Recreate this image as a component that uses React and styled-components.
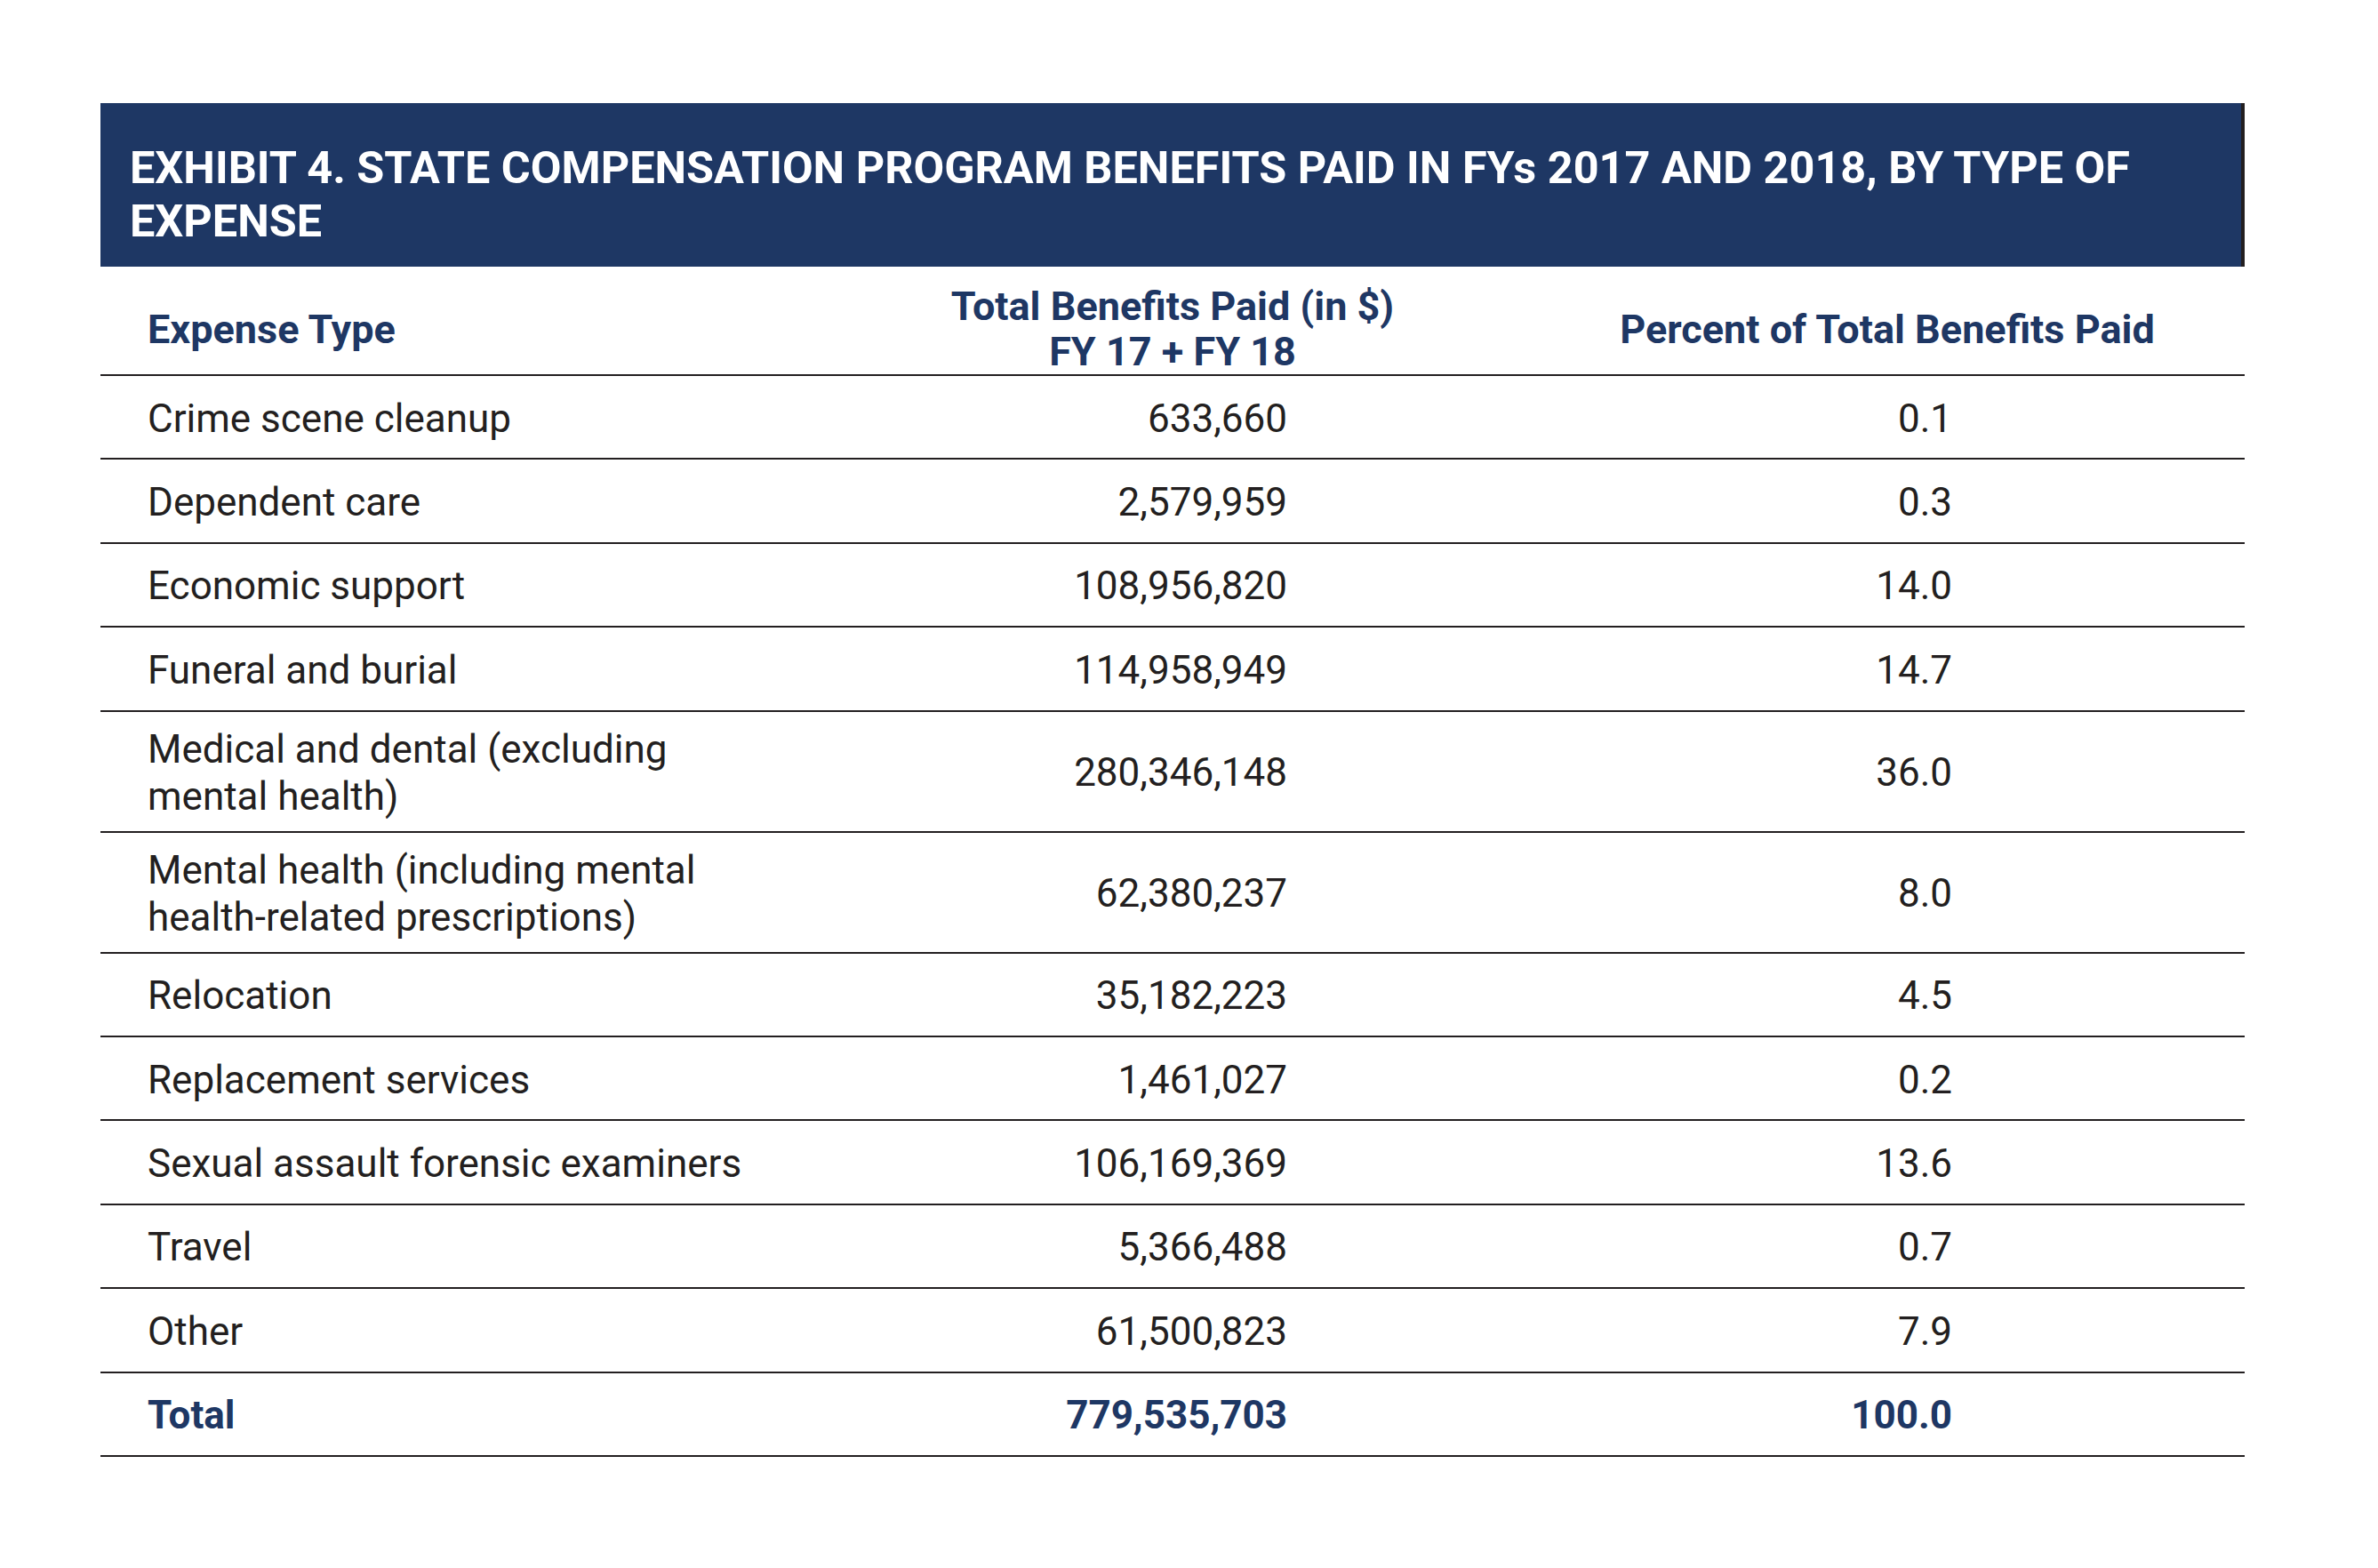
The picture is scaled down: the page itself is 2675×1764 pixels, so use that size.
import React from "react";
import styled, { createGlobalStyle } from "styled-components";

const rows = [
  { type: "Crime scene cleanup", total: "633,660", pct: "0.1" },
  { type: "Dependent care", total: "2,579,959", pct: "0.3" },
  { type: "Economic support", total: "108,956,820", pct: "14.0" },
  { type: "Funeral and burial", total: "114,958,949", pct: "14.7" },
  { type: "Medical and dental (excluding mental health)", total: "280,346,148", pct: "36.0" },
  { type: "Mental health (including mental health-related prescriptions)", total: "62,380,237", pct: "8.0" },
  { type: "Relocation", total: "35,182,223", pct: "4.5" },
  { type: "Replacement services", total: "1,461,027", pct: "0.2" },
  { type: "Sexual assault forensic examiners", total: "106,169,369", pct: "13.6" },
  { type: "Travel", total: "5,366,488", pct: "0.7" },
  { type: "Other", total: "61,500,823", pct: "7.9" },
];

const Global = createGlobalStyle`
  html, body {
    margin: 0;
    background: #fff;
  }
  body {
    font-family: Roboto, "Liberation Sans", sans-serif;
    color: #231f20;
  }
`;

const Page = styled.div`
  padding: 116px 0 120px 113px;
`;

const Exhibit = styled.section`
  width: 2412px;
`;

const TitleBar = styled.header`
  background: #1e3764;
  box-shadow: inset -4px 0 0 #231f20;
  height: 184px;
  box-sizing: border-box;
  padding: 43px 60px 0 33px;
`;

const Title = styled.h1`
  margin: 0;
  color: #fff;
  font-size: 50.4px;
  font-weight: 700;
  line-height: 60px;
  letter-spacing: 0;
`;

const Row = styled.div`
  display: grid;
  grid-template-columns: repeat(3, 804px);
  align-items: center;
  box-sizing: border-box;
  min-height: ${({ head }) => (head ? "121px" : "94.4px")};
  padding: ${({ head }) => (head ? "19px 0 0" : "16px 0 12px")};
  border-bottom: 2.4px solid #231f20;
  color: ${({ bold }) => (bold ? "#1e3764" : "#231f20")};
  font-weight: ${({ bold }) => (bold ? 700 : 400)};
`;

const Label = styled.div`
  padding-left: 53px;
  max-width: 705px;
  font-size: 44px;
  line-height: 53px;
`;

const Num = styled.div`
  text-align: right;
  padding-right: ${({ right }) => right}px;
  font-size: 44px;
  line-height: 53px;
`;

const HeadCell = styled.div`
  font-size: 45px;
  font-weight: 700;
  line-height: 51px;
  color: #1e3764;
  text-align: ${({ left }) => (left ? "left" : "center")};
  padding-left: ${({ left }) => (left ? "53px" : "0")};
`;

export default function App() {
  return (
    <>
      <Global />
      <Page>
        <Exhibit>
          <TitleBar>
            <Title>
              EXHIBIT 4. STATE COMPENSATION PROGRAM BENEFITS PAID IN FYs 2017 AND 2018, BY TYPE OF EXPENSE
            </Title>
          </TitleBar>
          <Row head>
            <HeadCell left>Expense Type</HeadCell>
            <HeadCell>
              Total Benefits Paid (in $)
              <br />
              FY 17 + FY 18
            </HeadCell>
            <HeadCell>Percent of Total Benefits Paid</HeadCell>
          </Row>
          {rows.map((r) => (
            <Row key={r.type}>
              <Label>{r.type}</Label>
              <Num right={273}>{r.total}</Num>
              <Num right={329}>{r.pct}</Num>
            </Row>
          ))}
          <Row bold>
            <Label>Total</Label>
            <Num right={273}>779,535,703</Num>
            <Num right={329}>100.0</Num>
          </Row>
        </Exhibit>
      </Page>
    </>
  );
}
